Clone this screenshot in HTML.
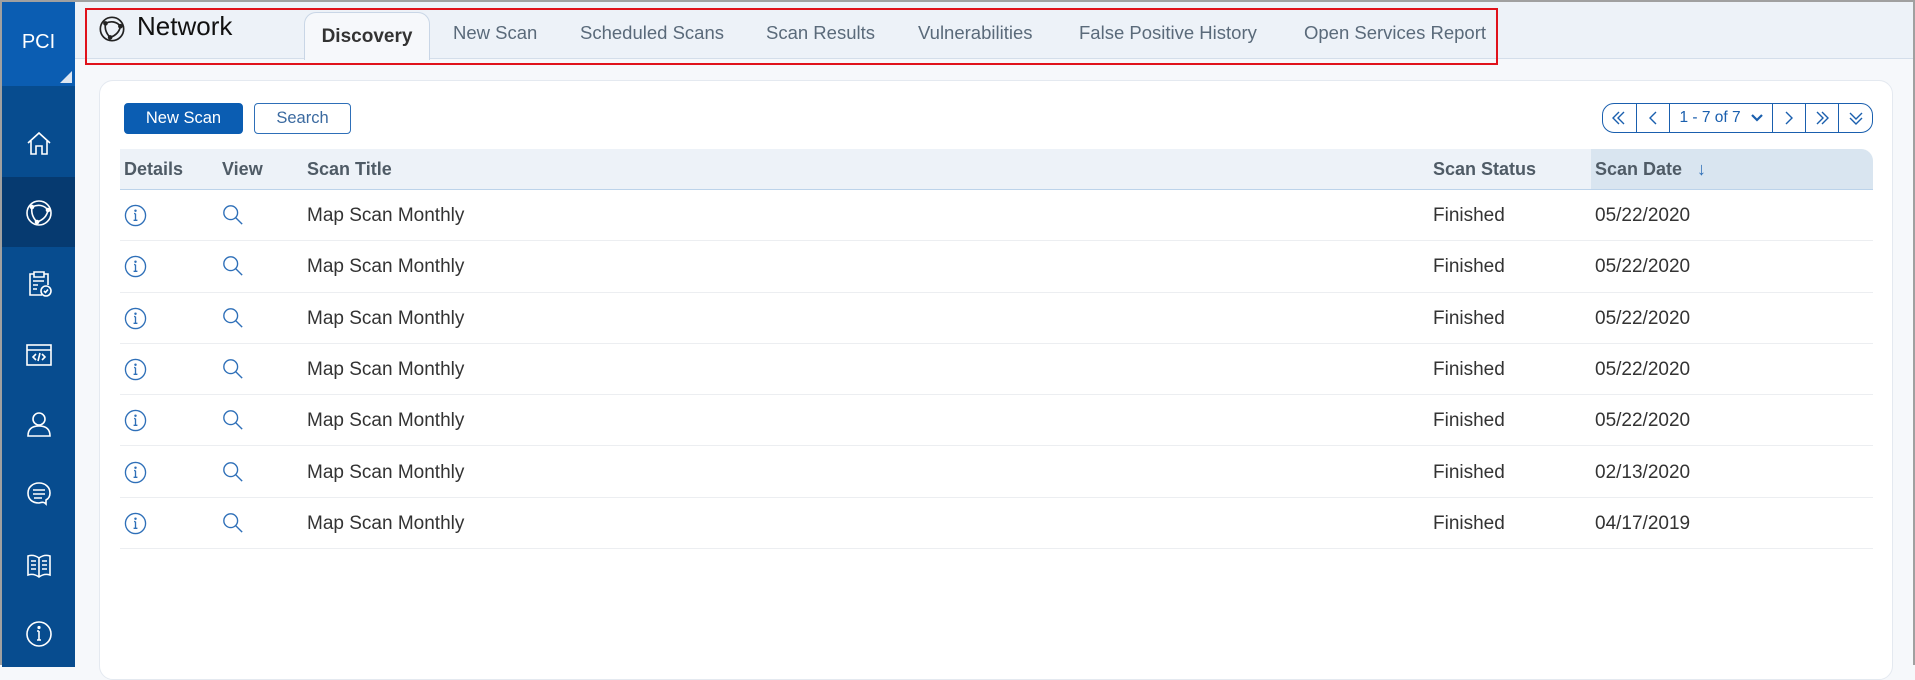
<!DOCTYPE html>
<html><head><meta charset="utf-8">
<style>
*{box-sizing:border-box;margin:0;padding:0}
body{width:1915px;height:665px;overflow:hidden;background:#f6f8fb;font-family:"Liberation Sans",Arial,sans-serif;position:relative;border:2px solid #a0a0a0;border-bottom:none}
.side{position:absolute;left:0;top:0;width:73px;height:665px;background:#074c8f}
.pci{position:absolute;left:0;top:0;width:73px;height:84px;background:#0b5db2;color:#fff;font-size:20px;text-align:center;line-height:80px}
.pci:after{content:"";position:absolute;right:3px;bottom:3px;border-left:12px solid transparent;border-bottom:12px solid #dde6f2}
.act{position:absolute;left:0;top:175px;width:73px;height:70px;background:#063a70}
.ico{position:absolute;left:22px;width:30px;height:30px}
.hdr{position:absolute;left:73px;top:0;right:0;height:57px;background:#edf2f8;border-bottom:1px solid #d4deea}
.red{position:absolute;left:83px;top:6px;width:1413px;height:57px;border:2px solid #e0121b}
.title{position:absolute;left:135px;top:9px;font-size:26px;color:#111}
.tab{position:absolute;top:20px;font-size:18.5px;color:#5a6a7a}
.dtab{position:absolute;left:302px;top:10px;width:126px;height:48px;background:#f6f8fb;border:1px solid #c9d6e6;border-bottom:none;border-radius:12px 12px 0 0;font-weight:bold;color:#333;font-size:19px;text-align:center;line-height:48px}
.card{position:absolute;left:97px;top:78px;width:1794px;height:600px;background:#fff;border:1px solid #e4e9f0;border-radius:14px}
.btn{position:absolute;top:101px;height:31px;border-radius:4px;font-size:16.5px;text-align:center;line-height:29px}
.pg{position:absolute;left:1600px;top:101px;width:271px;height:30px;border:1.5px solid #1a5fae;border-radius:12px;display:flex;color:#1a5fae}
.pg div{border-right:1.5px solid #1a5fae;display:flex;align-items:center;justify-content:center;height:100%}
.thead{position:absolute;left:118px;top:147px;width:1753px;height:41px;background:#edf2f8;border-bottom:1.5px solid #bcd3ea;border-radius:0 12px 0 0}
.thead span{position:absolute;top:10px;font-weight:bold;font-size:18px;color:#4f5b66}
.row{position:absolute;left:118px;width:1753px;height:51.3px;border-bottom:1.5px solid #eceef1}
.row span{position:absolute;top:15px;font-size:19px;color:#333}
.row svg{position:absolute;top:14px}
</style></head><body>
<div class="side">
<div class="pci">PCI</div>
<div class="act"></div>
<svg class="ico" style="top:126px" viewBox="0 0 30 30" fill="none" stroke="#fff" stroke-width="1.6"><path d="M4 15 L15 5 L26 15 M7 13 V26 H12 V18 H18 V26 H23 V13"/></svg>
<svg class="ico" style="top:196px" viewBox="0 0 30 30" fill="none" stroke="#fff" stroke-width="1.6"><circle cx="15" cy="15" r="12"/><path d="M8 9 C14 6 20 7 24 12 M24 12 C23 18 19 22 13 24 M13 24 C9 20 7 15 8 9"/><circle cx="8" cy="9" r="1.5" fill="#fff"/><circle cx="24" cy="12" r="1.5" fill="#fff"/><circle cx="13" cy="24" r="1.5" fill="#fff"/></svg>
<svg class="ico" style="top:267px" viewBox="0 0 30 30" fill="none" stroke="#fff" stroke-width="1.6"><path d="M18 26 H6 V5 H10 M20 5 H24 V16 M10 3 H20 V8 H10Z M9 12 H20 M9 16 H14 M9 20 H13"/><circle cx="22" cy="22" r="5"/><path d="M20 22 L21.5 23.5 L24 20.5"/></svg>
<svg class="ico" style="top:338px" viewBox="0 0 30 30" fill="none" stroke="#fff" stroke-width="1.6"><rect x="3" y="5" width="24" height="20"/><path d="M3 10 H27 M12 14 L9 17 L12 20 M18 14 L21 17 L18 20 M16 13 L14 21"/></svg>
<svg class="ico" style="top:407px" viewBox="0 0 30 30" fill="none" stroke="#fff" stroke-width="1.6"><circle cx="15" cy="10" r="6"/><path d="M4 27 C4 19 9 17 15 17 C21 17 26 19 26 27 Z"/></svg>
<svg class="ico" style="top:477px" viewBox="0 0 30 30" fill="none" stroke="#fff" stroke-width="1.6"><path d="M22 25 C20 23 19 23 15 24 C8 24 4 20 4 14 C4 8 9 4 15 4 C21 4 26 8 26 14 C26 18 24 20 22 21 Z M9 11 H21 M9 15 H21 M10 19 H18"/></svg>
<svg class="ico" style="top:548px" viewBox="0 0 30 30" fill="none" stroke="#fff" stroke-width="1.6"><path d="M15 8 C11 5 7 5 4 6 V25 C7 24 11 24 15 27 C19 24 23 24 26 25 V6 C23 5 19 5 15 8 Z M15 8 V27 M7 11 H12 M7 15 H12 M7 19 H12 M18 11 H23 M18 15 H23 M18 19 H23"/></svg>
<svg class="ico" style="top:617px" viewBox="0 0 30 30" fill="none" stroke="#fff" stroke-width="1.6"><circle cx="15" cy="15" r="12"/><path d="M15 12 V21 M13 21 H17 M13 12 H15"/><circle cx="15" cy="8.5" r="0.8" fill="#fff"/></svg>
</div>
<div class="hdr"></div>
<svg style="position:absolute;left:96px;top:13px" width="28" height="28" viewBox="0 0 30 30" fill="none" stroke="#222" stroke-width="1.8"><circle cx="15" cy="15" r="12.5"/><path d="M8 9 C14 6 20 7 24 12 M24 12 C23 18 19 22 13 24 M13 24 C9 20 7 15 8 9"/><circle cx="8" cy="9" r="1.6" fill="#222"/><circle cx="24" cy="12" r="1.6" fill="#222"/><circle cx="13" cy="24" r="1.6" fill="#222"/></svg>
<div class="title">Network</div>
<div class="dtab">Discovery</div>
<div class="tab" style="left:451px">New Scan</div>
<div class="tab" style="left:578px">Scheduled Scans</div>
<div class="tab" style="left:764px">Scan Results</div>
<div class="tab" style="left:916px">Vulnerabilities</div>
<div class="tab" style="left:1077px">False Positive History</div>
<div class="tab" style="left:1302px">Open Services Report</div>
<div class="red"></div>
<div class="card"></div>
<div class="btn" style="left:122px;width:119px;background:#0b5db2;color:#fff;border:1px solid #0b5db2">New Scan</div>
<div class="btn" style="left:252px;width:97px;background:#fff;color:#3b6aa0;border:1px solid #2e6fb8">Search</div>
<div class="pg">
<div style="width:34px"><svg width="16" height="16" viewBox="0 0 16 16" fill="none" stroke="#1a5fae" stroke-width="1.4"><path d="M8 2 L2 8 L8 14 M13 2 L7 8 L13 14"/></svg></div>
<div style="width:33px"><svg width="16" height="16" viewBox="0 0 16 16" fill="none" stroke="#1a5fae" stroke-width="1.4"><path d="M11 2 L5 8 L11 14"/></svg></div>
<div style="width:104px;font-size:15.5px">1 - 7 of 7 <svg style="margin-left:10px" width="12" height="8" viewBox="0 0 12 8" fill="none" stroke="#1a5fae" stroke-width="2.2"><path d="M1 1 L6 6 L11 1"/></svg></div>
<div style="width:33px"><svg width="16" height="16" viewBox="0 0 16 16" fill="none" stroke="#1a5fae" stroke-width="1.4"><path d="M5 2 L11 8 L5 14"/></svg></div>
<div style="width:33px"><svg width="16" height="16" viewBox="0 0 16 16" fill="none" stroke="#1a5fae" stroke-width="1.4"><path d="M3 2 L9 8 L3 14 M8 2 L14 8 L8 14"/></svg></div>
<div style="width:33px;border-right:none"><svg width="16" height="16" viewBox="0 0 16 16" fill="none" stroke="#1a5fae" stroke-width="1.4"><path d="M2 3 L8 9 L14 3 M2 8 L8 14 L14 8"/></svg></div>
</div>
<div class="thead">
<div style="position:absolute;left:1471px;top:0;width:282px;height:40px;background:#d9e5f0;border-radius:0 12px 0 0"></div>
<span style="left:4px">Details</span><span style="left:102px">View</span><span style="left:187px">Scan Title</span><span style="left:1313px">Scan Status</span><span style="left:1475px">Scan Date <span style="position:static;font-weight:normal;color:#2e6fb8;margin-left:10px">↓</span></span>
</div>
<div id="rows"></div>
<script>
var d=["05/22/2020","05/22/2020","05/22/2020","05/22/2020","05/22/2020","02/13/2020","04/17/2019"],h="";
for(var i=0;i<7;i++){h+='<div class="row" style="top:'+(188+i*51.3)+'px"><svg style="left:4px" width="23" height="23" viewBox="0 0 24 24" fill="none" stroke="#2e6fb8" stroke-width="1.4"><circle cx="12" cy="12" r="10.5"/><path d="M12 10 V17 M10 17 H14 M10.5 10 H12"/><circle cx="12" cy="7" r="0.6" fill="#2e6fb8"/></svg><svg style="left:102px" width="22" height="22" viewBox="0 0 24 24" fill="none" stroke="#2e6fb8" stroke-width="1.5"><circle cx="9.5" cy="9.5" r="7.5"/><path d="M15 15 L22 22"/></svg><span style="left:187px">Map Scan Monthly</span><span style="left:1313px">Finished</span><span style="left:1475px">'+d[i]+'</span></div>';}
document.getElementById("rows").innerHTML=h;
</script>
</body></html>
